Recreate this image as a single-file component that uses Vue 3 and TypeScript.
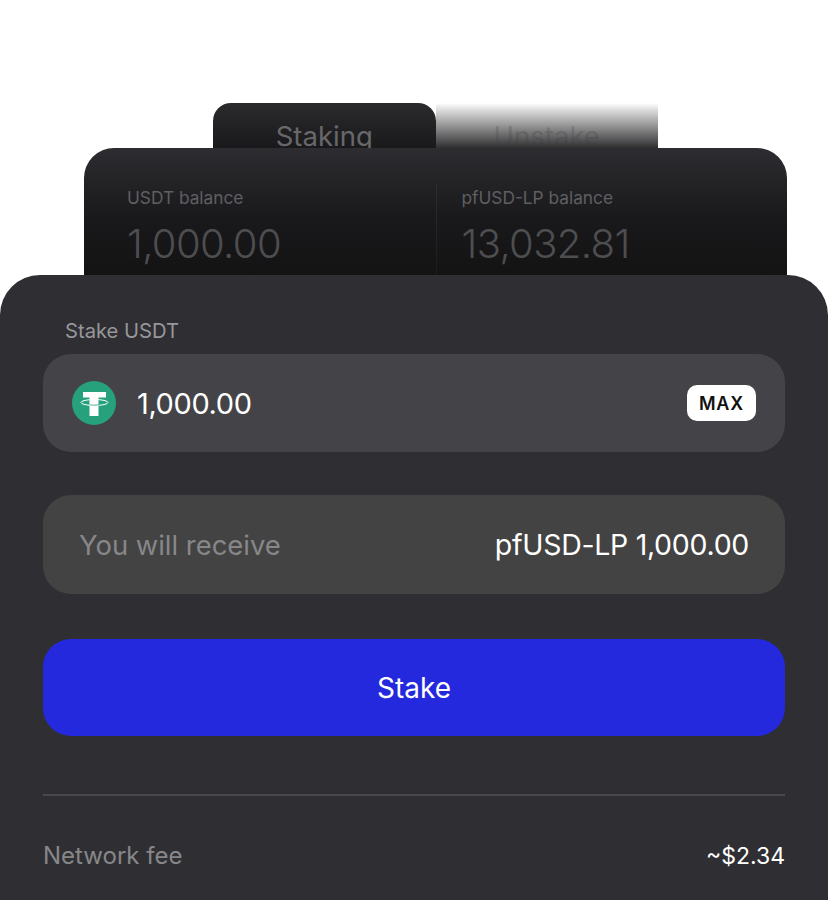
<script setup lang="ts">
const balances = [
  { label: 'USDT balance', value: '1,000.00' },
  { label: 'pfUSD-LP balance', value: '13,032.81' },
];
</script>

<template>
  <div class="page">
    <div class="tabs">
      <div class="tab tab-active">Staking</div>
      <div class="tab tab-idle">Unstake</div>
    </div>

    <section class="balances">
      <div v-for="b in balances" :key="b.label" class="balance">
        <div class="balance-label">{{ b.label }}</div>
        <div class="balance-value">{{ b.value }}</div>
      </div>
    </section>

    <section class="sheet">
      <div class="field-label">Stake USDT</div>
      <div class="amount">
        <svg class="token" viewBox="0 0 44 44" width="44" height="44">
          <circle cx="22" cy="22" r="22" fill="#26a17b" />
          <path fill="#fff" d="M11 11h23v5.500h-7.500V35h-9V16.500H11z" />
          <ellipse cx="22.500" cy="21.500" rx="13.500" ry="3" fill="none" stroke="#fff" stroke-width="1" />
          <path d="M18 23.900q4.500.5 9 0" fill="none" stroke="#26a17b" stroke-width=".8" />
        </svg>
        <span class="amount-value">1,000.00</span>
        <button class="max">MAX</button>
      </div>

      <div class="receive">
        <span class="receive-label">You will receive</span>
        <span class="receive-value">pfUSD-LP 1,000.00</span>
      </div>

      <button class="stake">Stake</button>

      <div class="fee">
        <span class="fee-label">Network fee</span>
        <span class="fee-value">~$2.34</span>
      </div>
    </section>
  </div>
</template>

<style>
html, body { background: #fff; }
</style>

<style scoped>
.page {
  height: 900px;
  overflow: hidden;
  padding-top: 103px;
  box-sizing: border-box;
  background: #fff;
  font-family: Inter, "Liberation Sans", sans-serif;
}

.tabs {
  display: flex;
  width: 445px;
  height: 45px;
  margin-left: 213px;
}
.tab {
  flex: 1;
  display: flex;
  justify-content: center;
  padding-top: 16px;
  box-sizing: border-box;
  font-size: 27.500px;
  line-height: 34px;
  overflow: hidden;
}
.tab-active {
  border-radius: 18px 18px 0 0;
  background: linear-gradient(#2b2b2e, #19191b);
  color: #68686b;
}
.tab-idle {
  background: linear-gradient(#ffffff, #e4e4e4 12%, #2f2f31 100%);
  color: rgba(60, 60, 62, 0.25);
}

.balances {
  display: grid;
  grid-template-columns: 1fr 1fr;
  width: 703px;
  height: 127px;
  margin-left: 84px;
  padding-top: 36px;
  box-sizing: border-box;
  border-radius: 30px 30px 0 0;
  background: linear-gradient(#2d2d31, #19191b 55%, #131314);
}
.balance {
  padding-left: 43px;
}
.balance + .balance {
  padding-left: 25px;
  border-left: 1px solid;
  border-image: linear-gradient(#2f2f32, #1a1a1c) 1;
}
.balance-label {
  font-size: 17.300px;
  line-height: 28px;
  color: #5f5f63;
}
.balance-value {
  margin-top: 8px;
  font-size: 40px;
  line-height: 48px;
  font-weight: 300;
  letter-spacing: -0.6px;
  color: #4e4e51;
}

.sheet {
  height: 625px;
  padding: 0 43px;
  border-radius: 40px 40px 0 0;
  background: #2f2f33;
}
.field-label {
  padding: 43px 0 10px 22px;
  font-size: 20.200px;
  line-height: 26px;
  color: #97979b;
}
.amount {
  display: flex;
  align-items: center;
  height: 98px;
  padding: 0 29px;
  border-radius: 28px;
  background: #444448;
}
.token { flex: none; }
.amount-value {
  margin-left: 21px;
  font-size: 29px;
  letter-spacing: -0.4px;
  color: #fff;
}
.max {
  margin-left: auto;
  width: 69px;
  height: 36px;
  padding: 0;
  border: 0;
  border-radius: 10px;
  background: #fff;
  color: #111;
  font-family: inherit;
  font-size: 18px;
  font-weight: 600;
  letter-spacing: 0.8px;
}
.receive {
  display: flex;
  align-items: center;
  justify-content: space-between;
  height: 99px;
  margin-top: 43px;
  padding: 0 36px;
  border-radius: 28px;
  background: #434344;
}
.receive-label {
  font-size: 27.400px;
  color: #87878a;
}
.receive-value {
  font-size: 28.500px;
  letter-spacing: -0.3px;
  color: #fff;
}
.stake {
  display: block;
  width: 100%;
  height: 97px;
  margin-top: 45px;
  border: 0;
  border-radius: 28px;
  background: #2529de;
  color: #fff;
  font-family: inherit;
  font-size: 28px;
}
.fee {
  display: flex;
  justify-content: space-between;
  margin-top: 58px;
  padding-top: 44px;
  border-top: 2px solid #48484c;
  line-height: 32px;
}
.fee-label { color: #87878a; font-size: 24px; }
.fee-value { color: #fff; font-size: 23px; }
</style>
